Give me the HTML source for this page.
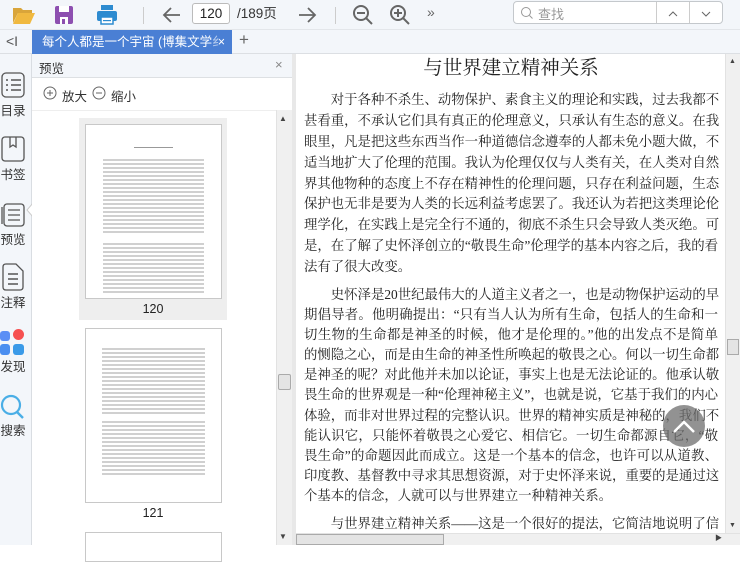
<!DOCTYPE html>
<html><head><meta charset="utf-8"><style>
*{margin:0;padding:0;box-sizing:border-box}
body{width:740px;height:545px;overflow:hidden;background:#fff;font-family:"Liberation Sans","Noto Sans CJK SC",sans-serif;position:relative}
.abs{position:absolute}
#tb{left:0;top:0;width:740px;height:30px;background:#f3f6fa;border-bottom:1px solid #e3e6ea}
#tabs{left:0;top:30px;width:740px;height:24px;background:#f3f6fa;border-bottom:1px solid #dcdfe3}
#side{left:0;top:54px;width:32px;height:491px;background:#f3f6fa;border-right:1px solid #d9dde2}
#prev{left:32px;top:54px;width:260px;height:491px;background:#fff}
.lbl{font-size:12.5px;color:#333;position:absolute;left:0;width:26px;text-align:center}
.pg{position:absolute;left:85px;width:137px;background:#fff;border:1px solid #c8c8c8}
.ln{position:absolute;left:20px;right:20px;height:1px;background:#bbb}
#txt{left:304px;width:414px;font-family:"Liberation Serif","Noto Serif CJK SC",serif;font-size:13.4px;color:#222;}
#txt div{white-space:nowrap;height:20.9px;line-height:20.9px;text-align:justify;text-align-last:justify}
#txt .p2{height:20.1px;line-height:20.1px}
</style></head><body>
<div id="tb" class="abs">
 <svg class="abs" style="left:12px;top:5px" width="24" height="20" viewBox="0 0 24 20"><path d="M1 3h8l2 2h9v3H6L1 18z" fill="#d9a53a"/><path d="M6 8h17l-5 11H1z" fill="#f0b940"/></svg>
 <svg class="abs" style="left:54px;top:5px" width="20" height="20" viewBox="0 0 20 20"><rect x="1" y="1" width="18" height="18" rx="2" fill="#8d4fb0"/><rect x="5" y="1" width="10" height="6" fill="#fff"/><rect x="6" y="12" width="8" height="7" fill="#fff"/><rect x="8" y="14" width="3" height="5" fill="#8d4fb0"/></svg>
 <svg class="abs" style="left:96px;top:4px" width="22" height="22" viewBox="0 0 22 22"><rect x="5" y="1" width="12" height="5" fill="#2d8bd0"/><rect x="1" y="7" width="20" height="10" rx="2" fill="#2d8bd0"/><rect x="5" y="13" width="12" height="7" fill="#fff" stroke="#2d8bd0" stroke-width="1.5"/><rect x="7" y="16" width="8" height="1.2" fill="#2d8bd0"/></svg>
 <div class="abs" style="left:143px;top:7px;width:1px;height:17px;background:#ccc"></div>
 <svg class="abs" style="left:162px;top:6px" width="20" height="18" viewBox="0 0 20 18"><path d="M18 9H3M9 2L2 9l7 7" stroke="#666" stroke-width="1.8" fill="none"/></svg>
 <div class="abs" style="left:192px;top:3px;width:38px;height:21px;border:1px solid #bbb;border-radius:3px;background:#fff;font-size:13.5px;text-align:center;line-height:19px;color:#222">120</div>
 <div class="abs" style="left:237px;top:5px;font-size:13.5px;color:#333;line-height:18px">/189页</div>
 <svg class="abs" style="left:297px;top:6px" width="20" height="18" viewBox="0 0 20 18"><path d="M2 9h15M11 2l7 7-7 7" stroke="#666" stroke-width="1.8" fill="none"/></svg>
 <div class="abs" style="left:335px;top:7px;width:1px;height:17px;background:#ccc"></div>
 <svg class="abs" style="left:352px;top:4px" width="22" height="22" viewBox="0 0 22 22"><circle cx="9" cy="9" r="7" stroke="#666" stroke-width="2" fill="none"/><path d="M5 9h8M14 14l6 6" stroke="#666" stroke-width="2"/></svg>
 <svg class="abs" style="left:389px;top:4px" width="22" height="22" viewBox="0 0 22 22"><circle cx="9" cy="9" r="7" stroke="#666" stroke-width="2" fill="none"/><path d="M5 9h8M9 5v8M14 14l6 6" stroke="#666" stroke-width="2"/></svg>
 <div class="abs" style="left:427px;top:4px;font-size:14px;color:#666">»</div>
 <div class="abs" style="left:513px;top:1px;width:210px;height:23px;border:1px solid #c4c8cc;border-radius:4px;background:#fff">
  <svg class="abs" style="left:6px;top:4px" width="14" height="14" viewBox="0 0 14 14"><circle cx="6" cy="6" r="4.5" stroke="#999" fill="none"/><path d="M9.5 9.5l3 3" stroke="#999"/></svg>
  <div class="abs" style="left:24px;top:2px;font-size:13px;color:#999">查找</div>
  <div class="abs" style="left:142px;top:0;width:1px;height:21px;background:#ccc"></div>
  <div class="abs" style="left:175px;top:0;width:1px;height:21px;background:#ccc"></div>
  <svg class="abs" style="left:153px;top:8px" width="12" height="7"><path d="M2 6l4-4 4 4" stroke="#666" fill="none"/></svg>
  <svg class="abs" style="left:186px;top:8px" width="12" height="7"><path d="M2 2l4 4 4-4" stroke="#666" fill="none"/></svg>
 </div>
</div>
<div id="tabs" class="abs">
 <div class="abs" style="left:6px;top:3px;font-size:14px;color:#555">&lt;I</div>
 <div class="abs" style="left:32px;top:0;width:200px;height:24px;background:#4a7fd4;color:#fff;font-size:12.5px;line-height:24px;padding-left:10px;white-space:nowrap;overflow:hidden">每个人都是一个宇宙 (博集文学<span style="opacity:.6">纟</span><span class="abs" style="right:7px;top:0">×</span></div>
 <div class="abs" style="left:239px;top:0;font-size:17px;color:#666">+</div>
</div>
<div id="side" class="abs">
 <svg class="abs" style="left:1px;top:18px" width="24" height="26" viewBox="0 0 24 26"><rect x="1" y="1" width="22" height="24" rx="4" stroke="#555" stroke-width="1.3" fill="none"/><path d="M5 8h2M10 8h10M5 13h2M10 13h10M5 18h2M10 18h10" stroke="#555" stroke-width="1.6"/></svg>
 <div class="lbl" style="top:46px">目录</div>
 <svg class="abs" style="left:1px;top:82px" width="24" height="26" viewBox="0 0 24 26"><rect x="1" y="1" width="22" height="24" rx="3" stroke="#555" stroke-width="1.3" fill="none"/><path d="M9 1v10l3-2 3 2V1" stroke="#555" stroke-width="1.3" fill="none"/></svg>
 <div class="lbl" style="top:110px">书签</div>
 <svg class="abs" style="left:0;top:148px" width="26" height="26" viewBox="0 0 26 26"><rect x="4" y="2" width="20" height="22" rx="3" stroke="#555" stroke-width="1.3" fill="#f3f6fa"/><path d="M2 5v17M8 8h12M8 13h12M8 18h12" stroke="#555" stroke-width="1.3"/></svg>
 <div class="lbl" style="top:175px">预览</div>
 <svg class="abs" style="left:1px;top:209px" width="24" height="28" viewBox="0 0 24 28"><path d="M2 4q0-3 3-3h10l7 7v16q0 3-3 3H5q-3 0-3-3z" stroke="#555" stroke-width="1.3" fill="none"/><path d="M7 11h10M7 16h10M7 21h10" stroke="#555" stroke-width="1.5"/></svg>
 <div class="lbl" style="top:238px">注释</div>
 <div class="abs" style="left:0;top:277px;width:10px;height:10px;background:#5b8ff5;border-radius:3px"></div>
 <div class="abs" style="left:13px;top:275px;width:11px;height:11px;background:#f65050;border-radius:50%"></div>
 <div class="abs" style="left:0;top:290px;width:10px;height:11px;background:#4a8ef0;border-radius:3px"></div>
 <div class="abs" style="left:13px;top:290px;width:11px;height:11px;background:#3a9ae8;border-radius:3px"></div>
 <div class="lbl" style="top:302px">发现</div>
 <svg class="abs" style="left:0;top:340px" width="26" height="28" viewBox="0 0 26 28"><circle cx="11" cy="11" r="9" stroke="#4aaee6" stroke-width="2.2" fill="none"/><path d="M17 18l6 6" stroke="#4aaee6" stroke-width="2.4"/></svg>
 <div class="lbl" style="top:366px">搜索</div>
</div>
<svg class="abs" style="left:26px;top:203px" width="8" height="14"><path d="M7 0L1 7l6 7" fill="#fff" stroke="#ccc"/></svg>
<div id="prev" class="abs">
 <div class="abs" style="left:0;top:0;width:260px;height:24px;background:#f3f6fa;border-bottom:1px solid #dde0e3"></div>
 <div class="abs" style="left:7px;top:4px;font-size:12.5px;color:#333">预览</div>
 <div class="abs" style="left:243px;top:3px;font-size:13px;color:#888">×</div>
 <svg class="abs" style="left:11px;top:32px" width="15" height="15" viewBox="0 0 15 15"><circle cx="7" cy="7" r="6" stroke="#666" fill="none"/><path d="M4 7h6M7 4v6" stroke="#666"/></svg>
 <div class="abs" style="left:30px;top:32px;font-size:12.5px;color:#333">放大</div>
 <svg class="abs" style="left:60px;top:32px" width="15" height="15" viewBox="0 0 15 15"><circle cx="7" cy="7" r="6" stroke="#666" fill="none"/><path d="M4 7h6" stroke="#666"/></svg>
 <div class="abs" style="left:79px;top:32px;font-size:12.5px;color:#333">缩小</div>
 <div class="abs" style="left:0;top:56px;width:260px;height:1px;background:#eee"></div>
 <div class="abs" style="left:244px;top:56px;width:16px;height:435px;background:#f0f0f0;border-left:1px solid #e2e2e2"></div>
 <div class="abs" style="left:247px;top:60px;font-size:8px;color:#444">▲</div>
 <div class="abs" style="left:246px;top:320px;width:13px;height:16px;background:#e4e4e4;border:1px solid #aaa;border-radius:2px"></div>
 <div class="abs" style="left:247px;top:478px;font-size:8px;color:#444">▼</div>
</div>
<div class="abs" style="left:79px;top:118px;width:148px;height:202px;background:#eeeeee"></div>
<div class="pg" style="top:124px;height:175px">
 <div class="ln" style="top:22px;left:48px;right:48px;background:#999"></div>
 <div style="position:absolute;left:17px;right:17px;top:32px;height:78px;background:repeating-linear-gradient(#fff 0,#fff 2px,#d0d0d0 2px,#d0d0d0 4px)"></div>
 <div style="position:absolute;left:17px;right:17px;top:116px;height:52px;background:repeating-linear-gradient(#fff 0,#fff 2px,#d0d0d0 2px,#d0d0d0 4px)"></div>
</div>
<div class="abs" style="left:79px;top:302px;width:148px;text-align:center;font-size:12.5px;color:#222">120</div>
<div class="pg" style="top:328px;height:175px">
 <div style="position:absolute;left:16px;right:16px;top:17px;height:70px;background:repeating-linear-gradient(#fff 0,#fff 2px,#d0d0d0 2px,#d0d0d0 4px)"></div>
 <div style="position:absolute;left:16px;right:16px;top:90px;height:56px;background:repeating-linear-gradient(#fff 0,#fff 2px,#d0d0d0 2px,#d0d0d0 4px)"></div>
</div>
<div class="abs" style="left:79px;top:506px;width:148px;text-align:center;font-size:12.5px;color:#222">121</div>
<div class="pg" style="top:532px;height:30px"></div>
<div class="abs" style="left:292px;top:54px;width:4px;height:491px;background:#e8e8e8"></div>
<div class="abs" style="left:296px;top:54px;width:444px;height:491px;background:#fff"></div>
<div class="abs" style="left:296px;top:52px;width:430px;text-align:center;font-family:'Liberation Serif','Noto Serif CJK SC',serif;font-size:19.5px;color:#222">与世界建立精神关系</div>
<div id="txt" class="abs" style="top:90px">
<div>　　对于各种不杀生、动物保护、素食主义的理论和实践，过去我都不</div>
<div>甚看重，不承认它们具有真正的伦理意义，只承认有生态的意义。在我</div>
<div>眼里，凡是把这些东西当作一种道德信念遵奉的人都未免小题大做，不</div>
<div>适当地扩大了伦理的范围。我认为伦理仅仅与人类有关，在人类对自然</div>
<div>界其他物种的态度上不存在精神性的伦理问题，只存在利益问题，生态</div>
<div>保护也无非是要为人类的长远利益考虑罢了。我还认为若把这类理论伦</div>
<div>理学化，在实践上是完全行不通的，彻底不杀生只会导致人类灭绝。可</div>
<div>是，在了解了史怀泽创立的“敬畏生命”伦理学的基本内容之后，我的看</div>
<div style="text-align-last:left">法有了很大改变。</div>
<div style="height:7px"></div>
<div class="p2">　　史怀泽是20世纪最伟大的人道主义者之一，也是动物保护运动的早</div>
<div class="p2">期倡导者。他明确提出：“只有当人认为所有生命，包括人的生命和一</div>
<div class="p2">切生物的生命都是神圣的时候，他才是伦理的。”他的出发点不是简单</div>
<div class="p2">的恻隐之心，而是由生命的神圣性所唤起的敬畏之心。何以一切生命都</div>
<div class="p2">是神圣的呢？对此他并未加以论证，事实上也是无法论证的。他承认敬</div>
<div class="p2">畏生命的世界观是一种“伦理神秘主义”，也就是说，它基于我们的内心</div>
<div class="p2">体验，而非对世界过程的完整认识。世界的精神实质是神秘的，我们不</div>
<div class="p2">能认识它，只能怀着敬畏之心爱它、相信它。一切生命都源自它，“敬</div>
<div class="p2">畏生命”的命题因此而成立。这是一个基本的信念，也许可以从道教、</div>
<div class="p2">印度教、基督教中寻求其思想资源，对于史怀泽来说，重要的是通过这</div>
<div class="p2" style="text-align-last:left">个基本的信念，人就可以与世界建立一种精神关系。</div>
<div style="height:8px"></div>
<div>　　与世界建立精神关系——这是一个很好的提法，它简洁地说明了信</div>
</div>
<div class="abs" style="left:663px;top:405px;width:42px;height:42px;border-radius:50%;background:rgba(110,110,110,.75)"></div>
<svg class="abs" style="left:670px;top:412px" width="28" height="28"><path d="M4 20l10-10 10 10" stroke="#fff" stroke-width="2.5" fill="none"/></svg>
<div class="abs" style="left:725px;top:54px;width:15px;height:479px;background:#f0f0f0;border-left:1px solid #e2e2e2"></div>
<div class="abs" style="left:729px;top:58px;font-size:7px;color:#444">▲</div>
<div class="abs" style="left:727px;top:339px;width:12px;height:16px;background:#e4e4e4;border:1px solid #aaa"></div>
<div class="abs" style="left:729px;top:522px;font-size:7px;color:#444">▼</div>
<div class="abs" style="left:296px;top:533px;width:444px;height:12px;background:#f0f0f0;border-top:1px solid #e2e2e2"></div>
<div class="abs" style="left:296px;top:534px;width:148px;height:11px;background:#e4e4e4;border:1px solid #aaa"></div>
<div class="abs" style="left:715px;top:533px;font-size:7px;color:#444">▶</div>
</body></html>
